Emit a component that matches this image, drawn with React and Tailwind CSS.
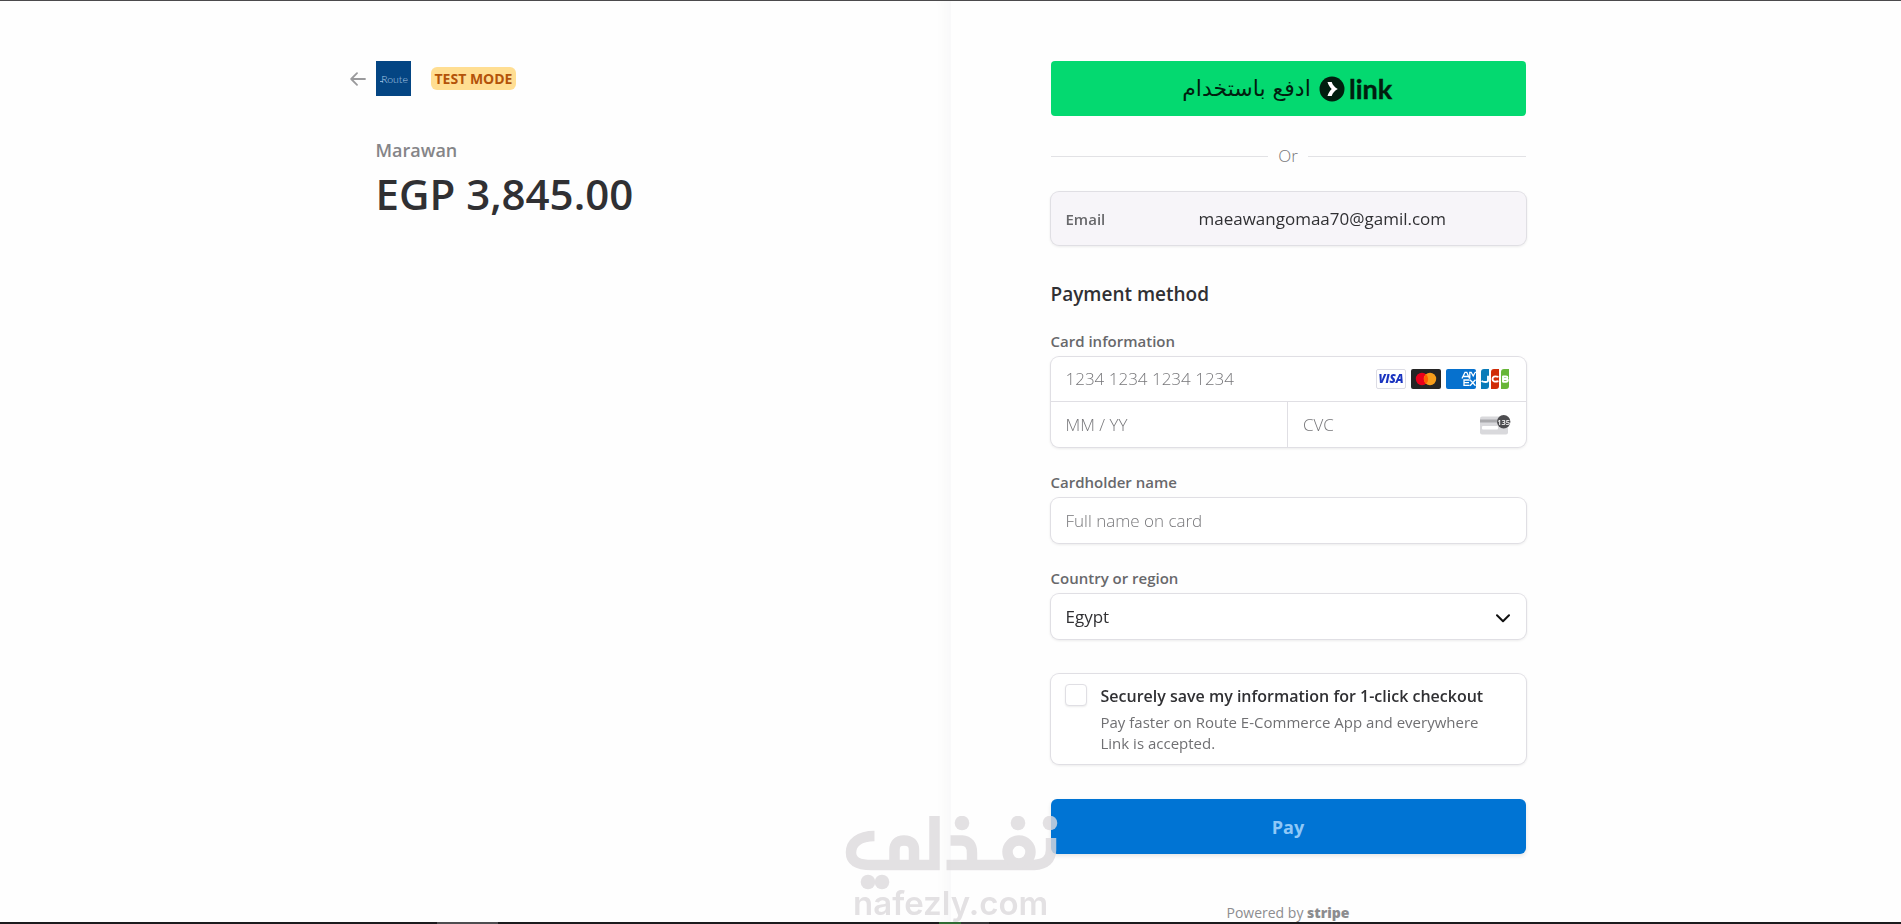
import { useState } from "react";

const box = "rounded-lg ring-1 ring-[#e0dfe4] drop-shadow-[0_1px_1px_rgba(0,0,0,0.07)]";
const labelText = "text-[15px] leading-6 font-semibold text-[#68686b]";
const inputText = "text-[17px] font-light outline-none placeholder:text-[#77777a]";

const BackArrow = () => (
  <svg width="16" height="14" viewBox="0 0 16 14" fill="none" stroke="#9a9a9c" strokeWidth="1.8" strokeLinecap="round" strokeLinejoin="round">
    <path d="M15 7H1.5M7 1.2L1.2 7L7 12.8" />
  </svg>
);

const RouteLogo = () => (
  <svg width="35" height="35" viewBox="0 0 35 35">
    <rect width="35" height="35" fill="#044583" />
    <text x="18.5" y="22" textAnchor="middle" fontSize="10.5" fontWeight="300" fill="#a9c8e4" fontFamily="Lato, sans-serif">Route</text>
    <path d="M4 20.5H7" stroke="#a9c8e4" strokeWidth="0.8" />
  </svg>
);

const LinkLogo = () => (
  <svg width="75" height="32" viewBox="0 0 75 32">
    <circle cx="13" cy="16" r="12.5" fill="#011e0f" />
    <path d="M8.500 9H12.700C13.700 12 15.800 14.500 18.800 16C15.800 17.500 13.700 20 12.700 23H8.500C9.300 20.200 10.700 17.900 12.700 16C10.700 14.100 9.300 11.800 8.500 9Z" fill="#fff" />
    <text x="30" y="26" fontSize="27" fontWeight="700" fill="#011e0f" stroke="#011e0f" strokeWidth="0.4" fontFamily="Lato, sans-serif">link</text>
  </svg>
);

const Visa = () => (
  <svg width="30" height="20" viewBox="0 0 30 20">
    <rect x="0.5" y="0.5" width="29" height="19" rx="1.5" fill="#fff" stroke="#dcdce4" />
    <text x="15" y="14.2" textAnchor="middle" fontSize="11.5" fontWeight="800" fontStyle="italic" fill="#1a34c0" fontFamily="Open Sans, sans-serif">VISA</text>
  </svg>
);

const Mastercard = () => (
  <svg width="30" height="20" viewBox="0 0 30 20">
    <rect width="30" height="20" rx="2" fill="#252525" />
    <circle cx="11" cy="10" r="6.2" fill="#eb001b" />
    <circle cx="19" cy="10" r="6.2" fill="#f79e1b" />
    <path d="M15 5.25a6.2 6.2 0 0 1 0 9.5a6.2 6.2 0 0 1 0-9.5Z" fill="#ff5f00" />
  </svg>
);

const Amex = () => (
  <svg width="30" height="20" viewBox="0 0 30 20">
    <clipPath id="amex">
      <rect width="30" height="20" rx="2" />
    </clipPath>
    <g clipPath="url(#amex)">
      <rect width="30" height="20" fill="#0671ce" />
      {/* AM */}
      <path d="M16 9.5L19 3.3H20.8L23.5 9.5M17.5 7.5H22M23.8 9.8V3.3H25.2L27.2 7L29.2 3.3H30.5" fill="none" stroke="#fff" strokeWidth="1.3" />
      {/* EX */}
      <path d="M23.5 11H18V16.4H23.5M18 13.7H23M24 10.8L29.5 16.8M29.5 10.8L24 16.8" fill="none" stroke="#fff" strokeWidth="1.3" />
    </g>
  </svg>
);

const Jcb = () => (
  <svg width="28" height="20" viewBox="0 0 28 20">
    <path d="M3 0H8V17a3 3 0 0 1-3 3H0V3a3 3 0 0 1 3-3Z" fill="#0a7cb8" />
    <path d="M13 0H18V17a3 3 0 0 1-3 3H10V3a3 3 0 0 1 3-3Z" fill="#d02c07" />
    <path d="M23 0H28V17a3 3 0 0 1-3 3H20V3a3 3 0 0 1 3-3Z" fill="#67b637" />
    <g fill="none" stroke="#fff" strokeWidth="1.9">
      <path d="M7 6.8V11.2Q7 13 4.5 13Q2 13 0.5 12" />
      <path d="M17.5 7.8Q11.5 6.2 11.5 10Q11.5 13.8 17.5 12.2" />
      <path d="M21.5 7.5H25Q26.5 7.5 26.5 8.7Q26.5 10 25 10H21.5M25 10Q26.8 10 26.8 11.3Q26.8 12.7 25 12.7H21.5M22 7V13" />
    </g>
  </svg>
);

const CvcCard = () => (
  <svg width="31" height="20" viewBox="0 0 31 20">
    <rect y="1.5" width="28" height="18" rx="2" fill="#d9d9dc" />
    <rect y="4.5" width="28" height="3" fill="#aaaaad" />
    <rect x="2" y="11" width="16" height="3.5" rx="1" fill="#fff" />
    <circle cx="23.7" cy="6.7" r="6.7" fill="#4d4d50" />
    <text x="23.7" y="9.5" textAnchor="middle" fontSize="7.5" fontWeight="600" fill="#fff" fontFamily="Open Sans, sans-serif">135</text>
  </svg>
);

const Watermark = () => (
  <svg width="214" height="108" viewBox="0 0 214 108" fill="none" stroke="#dddadd" opacity="0.8">
    <g strokeWidth="10.5">
      <path d="M30.5 20C15 20 7 27 7 36.5S15 49 28 49H90.5V0" />
      <path d="M50.5 49V34Q50.5 24.5 60 24.5Q70 24.5 70 34V49" />
      <path d="M106.5 24.5H118Q128 25 128 37V49M102.5 49H190Q207 48 207 34V22" />
      <circle cx="175" cy="36" r="11.5" />
    </g>
    <g fill="#dddadd" stroke="none">
      <circle cx="118" cy="7" r="7.3" />
      <circle cx="174" cy="7" r="7.3" />
      <circle cx="206" cy="7" r="7.3" />
      <circle cx="24" cy="66" r="7.3" />
      <circle cx="38" cy="66" r="7.3" />
      <text x="9" y="99" fontSize="33" fontWeight="600" fontFamily="Inter, sans-serif">nafezly.com</text>
    </g>
  </svg>
);

const App = () => {
  const [cardNumber, setCardNumber] = useState("");
  const [expiry, setExpiry] = useState("");
  const [cvc, setCvc] = useState("");
  const [name, setName] = useState("");
  const [country, setCountry] = useState("Egypt");
  const [save, setSave] = useState(false);

  return (
    <div className="relative h-screen overflow-hidden flex flex-col bg-[#fefefe] border-t border-[#4b4a4c] font-['Open_Sans','Noto_Sans',sans-serif] text-[#303033]">

      <div className="flex-1 min-h-0 flex">

        {/* SUMMARY */}
        <section className="w-1/2 flex justify-end pr-[100px] pt-[60px] shadow-[inset_-16px_0_16px_-12px_rgba(40,20,60,0.03)]">
          <div className="w-full max-w-[475px]">
            <div className="flex items-center h-[35px] -ml-[26px]">
              <a href="#back" aria-label="Back" className="mr-[10px]">
                <BackArrow />
              </a>
              <RouteLogo />
              <span className="ml-5 px-1 rounded-md bg-[#ffde92] text-[14px] leading-[23px] font-bold text-[#b35309]">
                TEST MODE
              </span>
            </div>
            <p className="mt-[40px] text-lg leading-7 font-semibold text-[#858588]">Marawan</p>
            <h1 className="text-[42px] leading-[60px] font-semibold">EGP 3,845.00</h1>
          </div>
        </section>

        {/* PAYMENT */}
        <section className="w-1/2 pl-[100px] pt-[60px]">
          <form className="w-full max-w-[475px]" onSubmit={(e) => e.preventDefault()}>
            <button type="button" className="w-full h-[55px] rounded flex items-center justify-center gap-2 bg-[#04d970] text-[#011e0f]">
              <span dir="rtl" lang="ar" className="text-[22px] font-['DejaVu_Sans',sans-serif]">ادفع باستخدام</span>
              <LinkLogo />
            </button>

            <div className="flex items-center gap-[10px] h-[76px] pt-1 text-[17px] font-light text-[#77777a]">
              <span className="flex-1 h-px bg-[#e2e2e5]" />
              Or
              <span className="flex-1 h-px bg-[#e2e2e5]" />
            </div>

            <div className={`flex items-center h-[53px] px-[15px] bg-[#f7f5f9] ${box}`}>
              <span className={`w-[133px] ${labelText}`}>Email</span>
              <span className="text-[17px]">maeawangomaa70@gamil.com</span>
            </div>

            <h2 className="mt-[35px] text-[19px] leading-7 font-semibold">Payment method</h2>

            {/* CARD */}
            <label htmlFor="card" className={`block mt-[21px] mb-1 ${labelText}`}>
              Card information
            </label>
            <div className={`bg-white ${box}`}>
              <div className="flex items-center h-[45px] pl-[15px] pr-[17px] border-b border-[#e0dfe4]">
                <input
                  id="card"
                  value={cardNumber}
                  onChange={(e) => setCardNumber(e.target.value)}
                  placeholder="1234 1234 1234 1234"
                  className={`flex-1 min-w-0 ${inputText}`}
                />
                <div className="flex gap-[5px]">
                  <Visa />
                  <Mastercard />
                  <Amex />
                  <Jcb />
                </div>
              </div>
              <div className="flex h-[45px]">
                <input
                  aria-label="Expiration"
                  value={expiry}
                  onChange={(e) => setExpiry(e.target.value)}
                  placeholder="MM / YY"
                  className={`w-1/2 min-w-0 px-[15px] border-r border-[#e0dfe4] ${inputText}`}
                />
                <div className="w-1/2 flex items-center px-[15px]">
                  <input
                    aria-label="CVC"
                    value={cvc}
                    onChange={(e) => setCvc(e.target.value)}
                    placeholder="CVC"
                    className={`flex-1 min-w-0 ${inputText}`}
                  />
                  <CvcCard />
                </div>
              </div>
            </div>

            {/* NAME */}
            <label htmlFor="name" className={`block mt-[23px] mb-1 ${labelText}`}>
              Cardholder name
            </label>
            <input
              id="name"
              value={name}
              onChange={(e) => setName(e.target.value)}
              placeholder="Full name on card"
              className={`block w-full h-[45px] px-[15px] bg-white ${inputText} ${box}`}
            />

            {/* COUNTRY */}
            <label htmlFor="country" className={`block mt-[23px] mb-1 ${labelText}`}>
              Country or region
            </label>
            <div className="relative">
              <select
                id="country"
                value={country}
                onChange={(e) => setCountry(e.target.value)}
                className={`block w-full h-[45px] px-[15px] bg-white text-[17px] outline-none appearance-none ${box}`}
              >
                <option>Egypt</option>
              </select>
              <svg className="absolute right-4 top-5 pointer-events-none" width="14" height="9" viewBox="0 0 14 9" fill="none" stroke="#111" strokeWidth="2" strokeLinecap="round" strokeLinejoin="round">
                <path d="M1 1.2L7 7.2L13 1.2" />
              </svg>
            </div>

            {/* SAVE INFO */}
            <div className={`mt-[35px] flex gap-[14px] h-[90px] pt-[10px] pl-[14px] pr-8 bg-white ${box}`}>
              <input
                id="save"
                type="checkbox"
                checked={save}
                onChange={(e) => setSave(e.target.checked)}
                className="shrink-0 size-[22px] rounded border border-[#e0dfe4] bg-white appearance-none checked:bg-[#0074d4] shadow-[0_1px_2px_rgba(0,0,0,0.08)]"
              />
              <div>
                <label htmlFor="save" className="block text-[16px] leading-6 font-semibold whitespace-nowrap">
                  Securely save my information for 1-click checkout
                </label>
                <p className="mt-1 text-[15px] leading-[21px] text-[#707073]">
                  Pay faster on Route E-Commerce App and everywhere Link is accepted.
                </p>
              </div>
            </div>

            <button type="submit" className="mt-[35px] w-full h-[55px] rounded-md bg-[#0074d4] text-lg font-bold text-[#8fc8f7] shadow-[0_2px_4px_rgba(0,0,0,0.1)]">
              Pay
            </button>

            <p className="mt-[50px] text-center text-[14px] leading-[18px] text-[#8c8c8f]">
              Powered by <span className="font-extrabold">stripe</span>
            </p>
          </form>
        </section>
      </div>

      {/* WATERMARK */}
      <div className="absolute bottom-0 inset-x-0 flex justify-center pointer-events-none">
        <Watermark />
      </div>

      {/* BOTTOM EDGE */}
      <div className="relative shrink-0 h-[2px] flex bg-[#1c1b1d]">
        <span className="w-[23%]" />
        <span className="w-[61px] bg-[#4f4d50]" />
        <span className="flex-1" />
        <span className="w-[22px] bg-[#2f6b33]" />
        <span className="w-[28px] bg-[#363537]" />
        <span className="w-[48%]" />
      </div>
    </div>
  );
};

export default App;
